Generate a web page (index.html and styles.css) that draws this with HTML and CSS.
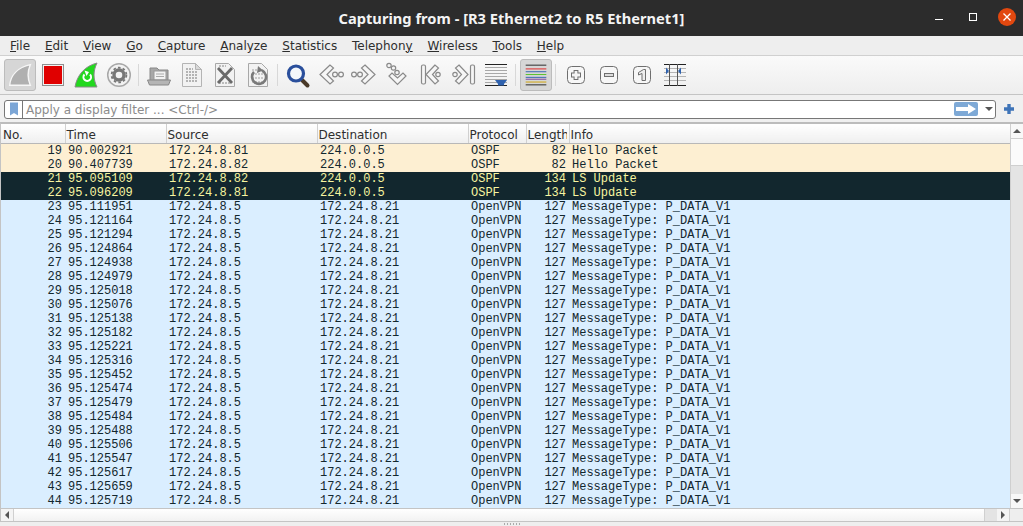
FILE: index.html
```html
<!DOCTYPE html>
<html>
<head>
	<title>Capturing from - [R3 Ethernet2 to R5 Ethernet1]</title>
	<meta charset="utf-8">
	<link rel="stylesheet" href="styles.css">
</head>
<body>
	<div class="titlebar">
		<span class="title">Capturing from - [R3 Ethernet2 to R5 Ethernet1]</span>
		<div class="winBtns">
			<span class="winMin"></span>
			<span class="winMax"></span>
			<span class="winClose">
				<svg width="18" height="18" viewBox="0 0 18 18"><path d="M5.5 5.5l7 7M12.5 5.5l-7 7" stroke="#fff" stroke-width="1.3"/></svg>
			</span>
		</div>
	</div>

	<div class="menubar">
		<span><u>F</u>ile</span>
		<span><u>E</u>dit</span>
		<span><u>V</u>iew</span>
		<span><u>G</u>o</span>
		<span><u>C</u>apture</span>
		<span><u>A</u>nalyze</span>
		<span><u>S</u>tatistics</span>
		<span>Telephon<u>y</u></span>
		<span><u>W</u>ireless</span>
		<span><u>T</u>ools</span>
		<span><u>H</u>elp</span>
	</div>

	<div class="toolbar">
		<div class="tool active">
			<svg width="32" height="32" viewBox="0 0 32 32"><path d="M5 27C6 16 14 8 27 5c-3 7-3 15 0 22z" fill="#b0b0b0" stroke="#f6f6f6" stroke-width="1.5"/></svg>
		</div>
		<div class="tool">
			<svg width="32" height="32" viewBox="0 0 32 32"><rect x="5.500" y="5.500" width="21" height="21" fill="#f2f2f2" stroke="#8f8f8f"/><rect x="7" y="7" width="18" height="18" fill="#e00000"/></svg>
		</div>
		<div class="tool">
			<svg width="32" height="32" viewBox="0 0 32 32"><path d="M5 28C7 16 15 7 27 4c-4 8-4 16 0 24z" fill="#22d81e" stroke="#8a8a8a"/><path d="M20 15.500a3.800 3.800 0 1 1-5.500 0" fill="none" stroke="#fff" stroke-width="2"/><path d="M14.500 11.500l4.500 1.500-2.500 4z" fill="#fff"/></svg>
		</div>
		<div class="tool">
			<svg width="32" height="32" viewBox="0 0 32 32"><circle cx="16" cy="16" r="11.300" fill="#f2f2f2" stroke="#a8a8a8" stroke-width="1.500"/><circle cx="16" cy="16" r="5" fill="none" stroke="#777" stroke-width="3.400"/><circle cx="16" cy="16" r="7.400" fill="none" stroke="#777" stroke-width="1.800" stroke-dasharray="2.600 2.200"/></svg>
		</div>
		<div class="sep"></div>
		<div class="tool">
			<svg width="32" height="32" viewBox="0 0 32 32"><path d="M7 23V9h7l2 2h9v12z" fill="#a8a8a8" stroke="#888"/><rect x="11" y="12" width="12" height="9" fill="#f2f2f2" stroke="#999"/><path d="M13 15h8M13 17.500h8" stroke="#aaa"/><path d="M4.500 21h23l-2 5h-19z" fill="#b5b5b5" stroke="#888"/></svg>
		</div>
		<div class="tool">
			<svg width="32" height="32" viewBox="0 0 32 32"><path d="M6.500 4.500h13l6 6v17h-19z" fill="#f2f2f2" stroke="#b4b4b4"/><path d="M19.500 4.500v6h6z" fill="#d8d8d8" stroke="#b4b4b4"/><path d="M10 10h7M10 13h12M10 16h12M10 19h12M10 22h12" stroke="#a0a0a0" stroke-width="1.400" stroke-dasharray="2 1"/></svg>
		</div>
		<div class="tool">
			<svg width="32" height="32" viewBox="0 0 32 32"><path d="M6.500 4.500h13l6 6v17h-19z" fill="#f2f2f2" stroke="#a8a8a8"/><path d="M10 24h12M10 7h7" stroke="#aaa" stroke-width="1.400" stroke-dasharray="2 1"/><path d="M9 9l14 15M23 9L9 24" stroke="#6a6a6a" stroke-width="2.800"/></svg>
		</div>
		<div class="tool">
			<svg width="32" height="32" viewBox="0 0 32 32"><path d="M6.500 4.500h13l6 6v17h-19z" fill="#f2f2f2" stroke="#a8a8a8"/><path d="M10 11h12M10 15h12M10 19h12M10 23h12" stroke="#bbb" stroke-width="1.400" stroke-dasharray="2 1"/><path d="M20 11.500a7 7 0 1 1-8 1.500" fill="none" stroke="#7a7a7a" stroke-width="2.600"/><path d="M16 7l5 4.500-6 2.500z" fill="#7a7a7a"/></svg>
		</div>
		<div class="sep"></div>
		<div class="tool">
			<svg width="32" height="32" viewBox="0 0 32 32"><path d="M20 21l5.500 5.500" stroke="#4a3a28" stroke-width="4" stroke-linecap="round"/><circle cx="14" cy="14.500" r="7.500" fill="#f4f7fb" stroke="#2a4f9c" stroke-width="3.200"/></svg>
		</div>
		<div class="tool">
			<svg class="arrowIcon" width="32" height="32" viewBox="0 0 32 32"><path d="M15 6L5 15.500 15 25l3.500-3-6.500-6.500L18.500 9z"/><circle cx="20" cy="15.500" r="2.400"/><circle cx="26" cy="15.500" r="2.400"/></svg>
		</div>
		<div class="tool">
			<svg class="arrowIcon" width="32" height="32" viewBox="0 0 32 32"><path d="M17 6l10 9.500L17 25l-3.500-3 6.500-6.500L13.500 9z"/><circle cx="12" cy="15.500" r="2.400"/><circle cx="6" cy="15.500" r="2.400"/></svg>
		</div>
		<div class="tool">
			<svg class="arrowIcon" width="32" height="32" viewBox="0 0 32 32"><path d="M8 17l8.500 8.500L25 17l-3-3-5.500 5-5.500-5z"/><circle cx="16" cy="13.500" r="2.200"/><circle cx="12.500" cy="9" r="2.200"/><circle cx="8" cy="6.500" r="2.200"/></svg>
		</div>
		<div class="tool">
			<svg class="arrowIcon" width="32" height="32" viewBox="0 0 32 32"><rect x="7.500" y="6" width="4" height="19" rx="1.500"/><path d="M21 6l-9 9.500 9 9.500 3.500-3-6-6.500 6-6.500z"/><circle cx="24" cy="15.500" r="2.200"/></svg>
		</div>
		<div class="tool">
			<svg class="arrowIcon" width="32" height="32" viewBox="0 0 32 32"><rect x="23.500" y="6" width="4" height="19" rx="1.500"/><path d="M12 6l9 9.500-9 9.500-3.500-3 6-6.500-6-6.500z"/><circle cx="8" cy="15.500" r="2.200"/></svg>
		</div>
		<div class="tool">
			<svg width="32" height="32" viewBox="0 0 32 32"><path d="M5 5.500h22M5 26.500h22" stroke="#222"/><path d="M5 8.500h22M5 11.500h22M5 14.500h22M5 17.500h22M5 20.500h22M5 23.500h22" stroke="#a8a8a8"/><path d="M15 21h12l-3 4v1.500h-6V25z" fill="#2f62ae"/></svg>
		</div>
		<div class="sep"></div>
		<div class="tool active">
			<svg width="32" height="32" viewBox="0 0 32 32"><path d="M5 5.500h22M5 26.500h22" stroke="#222"/><path d="M5 9.500h22" stroke="#e02020"/><path d="M5 12.500h22" stroke="#2f62ae"/><path d="M5 15.500h22" stroke="#50c020"/><path d="M5 18.500h22" stroke="#2f62ae"/><path d="M5 20.500h22" stroke="#7a3f9a"/><path d="M5 23.500h22" stroke="#d0a000"/></svg>
		</div>
		<div class="sep"></div>
		<div class="tool">
			<svg width="32" height="32" viewBox="0 0 32 32"><rect x="7.500" y="7.500" width="17" height="17" rx="4" fill="#f7f7f7" stroke="#6f6f6f"/><path d="M16 11v10M11 16h10" stroke="#6f6f6f" stroke-width="4.800"/><path d="M16 12v8M12 16h8" stroke="#f4f4f4" stroke-width="2.800"/></svg>
		</div>
		<div class="tool">
			<svg width="32" height="32" viewBox="0 0 32 32"><rect x="7.500" y="7.500" width="17" height="17" rx="4" fill="#f7f7f7" stroke="#6f6f6f"/><rect x="11.500" y="14.500" width="9" height="3" fill="#ddd" stroke="#6f6f6f"/></svg>
		</div>
		<div class="tool">
			<svg width="32" height="32" viewBox="0 0 32 32"><rect x="7.500" y="7.500" width="17" height="17" rx="4" fill="#f7f7f7" stroke="#6f6f6f"/><path d="M12.500 13.500l5-3h2v11h-3.500v-7l-3.500 1.500z" fill="#eee" stroke="#6f6f6f"/></svg>
		</div>
		<div class="tool">
			<svg width="32" height="32" viewBox="0 0 32 32"><path d="M5 5.500h22M5 26.500h22" stroke="#222"/><path d="M5 9.500h22M5 13.500h22M5 17.500h22M5 21.500h22" stroke="#b4b4b4"/><path d="M10.500 5v22M18.500 5v22" stroke="#555"/><path d="M7 8.500l3 3.500-3 3.500zM22 8.500L19 12l3 3.500z" fill="#2f62ae"/></svg>
		</div>
	</div>

	<div class="filterbar">
		<div class="filterInput">
			<span class="bookmark">
				<svg width="8" height="14" viewBox="0 0 10 16"><path d="M0 0h10v16l-5-3-5 3z" fill="#7ca6d6"/></svg>
			</span>
			<span class="placeholder">Apply a display filter ... &lt;Ctrl-/&gt;</span>
			<span class="applyBtn">
				<svg width="20" height="10" viewBox="0 0 20 10"><path d="M0 3h12V0l8 5-8 5V7H0z" fill="#fff"/></svg>
			</span>
			<span class="dropArrow"></span>
		</div>
		<svg class="addBtn" width="12" height="12" viewBox="0 0 12 12"><path d="M6 1v10M1 6h10" stroke="#3f74b8" stroke-width="3.400"/></svg>
	</div>

	<div class="listWrap">
		<div class="listMain">
			<div class="tableBox">
				<table>
					<colgroup>
						<col class="cNo"><col class="cTime"><col class="cSrc"><col class="cDst"><col class="cProto"><col class="cLen"><col class="cInfo">
					</colgroup>
					<thead>
						<tr><th class="first">No.</th><th>Time</th><th>Source</th><th>Destination</th><th>Protocol</th><th><span class="clip">Length</span></th><th>Info</th></tr>
					</thead>
					<tbody>
						<tr class="ospf"><td class="num">19</td><td>90.002921</td><td>172.24.8.81</td><td>224.0.0.5</td><td>OSPF</td><td class="num">82</td><td>Hello Packet</td></tr>
						<tr class="ospf"><td class="num">20</td><td>90.407739</td><td>172.24.8.82</td><td>224.0.0.5</td><td>OSPF</td><td class="num">82</td><td>Hello Packet</td></tr>
						<tr class="dark"><td class="num">21</td><td>95.095109</td><td>172.24.8.82</td><td>224.0.0.5</td><td>OSPF</td><td class="num">134</td><td>LS Update</td></tr>
						<tr class="dark"><td class="num">22</td><td>95.096209</td><td>172.24.8.81</td><td>224.0.0.5</td><td>OSPF</td><td class="num">134</td><td>LS Update</td></tr>
						<tr><td class="num">23</td><td>95.111951</td><td>172.24.8.5</td><td>172.24.8.21</td><td>OpenVPN</td><td class="num">127</td><td>MessageType: P_DATA_V1</td></tr>
						<tr><td class="num">24</td><td>95.121164</td><td>172.24.8.5</td><td>172.24.8.21</td><td>OpenVPN</td><td class="num">127</td><td>MessageType: P_DATA_V1</td></tr>
						<tr><td class="num">25</td><td>95.121294</td><td>172.24.8.5</td><td>172.24.8.21</td><td>OpenVPN</td><td class="num">127</td><td>MessageType: P_DATA_V1</td></tr>
						<tr><td class="num">26</td><td>95.124864</td><td>172.24.8.5</td><td>172.24.8.21</td><td>OpenVPN</td><td class="num">127</td><td>MessageType: P_DATA_V1</td></tr>
						<tr><td class="num">27</td><td>95.124938</td><td>172.24.8.5</td><td>172.24.8.21</td><td>OpenVPN</td><td class="num">127</td><td>MessageType: P_DATA_V1</td></tr>
						<tr><td class="num">28</td><td>95.124979</td><td>172.24.8.5</td><td>172.24.8.21</td><td>OpenVPN</td><td class="num">127</td><td>MessageType: P_DATA_V1</td></tr>
						<tr><td class="num">29</td><td>95.125018</td><td>172.24.8.5</td><td>172.24.8.21</td><td>OpenVPN</td><td class="num">127</td><td>MessageType: P_DATA_V1</td></tr>
						<tr><td class="num">30</td><td>95.125076</td><td>172.24.8.5</td><td>172.24.8.21</td><td>OpenVPN</td><td class="num">127</td><td>MessageType: P_DATA_V1</td></tr>
						<tr><td class="num">31</td><td>95.125138</td><td>172.24.8.5</td><td>172.24.8.21</td><td>OpenVPN</td><td class="num">127</td><td>MessageType: P_DATA_V1</td></tr>
						<tr><td class="num">32</td><td>95.125182</td><td>172.24.8.5</td><td>172.24.8.21</td><td>OpenVPN</td><td class="num">127</td><td>MessageType: P_DATA_V1</td></tr>
						<tr><td class="num">33</td><td>95.125221</td><td>172.24.8.5</td><td>172.24.8.21</td><td>OpenVPN</td><td class="num">127</td><td>MessageType: P_DATA_V1</td></tr>
						<tr><td class="num">34</td><td>95.125316</td><td>172.24.8.5</td><td>172.24.8.21</td><td>OpenVPN</td><td class="num">127</td><td>MessageType: P_DATA_V1</td></tr>
						<tr><td class="num">35</td><td>95.125452</td><td>172.24.8.5</td><td>172.24.8.21</td><td>OpenVPN</td><td class="num">127</td><td>MessageType: P_DATA_V1</td></tr>
						<tr><td class="num">36</td><td>95.125474</td><td>172.24.8.5</td><td>172.24.8.21</td><td>OpenVPN</td><td class="num">127</td><td>MessageType: P_DATA_V1</td></tr>
						<tr><td class="num">37</td><td>95.125479</td><td>172.24.8.5</td><td>172.24.8.21</td><td>OpenVPN</td><td class="num">127</td><td>MessageType: P_DATA_V1</td></tr>
						<tr><td class="num">38</td><td>95.125484</td><td>172.24.8.5</td><td>172.24.8.21</td><td>OpenVPN</td><td class="num">127</td><td>MessageType: P_DATA_V1</td></tr>
						<tr><td class="num">39</td><td>95.125488</td><td>172.24.8.5</td><td>172.24.8.21</td><td>OpenVPN</td><td class="num">127</td><td>MessageType: P_DATA_V1</td></tr>
						<tr><td class="num">40</td><td>95.125506</td><td>172.24.8.5</td><td>172.24.8.21</td><td>OpenVPN</td><td class="num">127</td><td>MessageType: P_DATA_V1</td></tr>
						<tr><td class="num">41</td><td>95.125547</td><td>172.24.8.5</td><td>172.24.8.21</td><td>OpenVPN</td><td class="num">127</td><td>MessageType: P_DATA_V1</td></tr>
						<tr><td class="num">42</td><td>95.125617</td><td>172.24.8.5</td><td>172.24.8.21</td><td>OpenVPN</td><td class="num">127</td><td>MessageType: P_DATA_V1</td></tr>
						<tr><td class="num">43</td><td>95.125659</td><td>172.24.8.5</td><td>172.24.8.21</td><td>OpenVPN</td><td class="num">127</td><td>MessageType: P_DATA_V1</td></tr>
						<tr><td class="num">44</td><td>95.125719</td><td>172.24.8.5</td><td>172.24.8.21</td><td>OpenVPN</td><td class="num">127</td><td>MessageType: P_DATA_V1</td></tr>
					</tbody>
				</table>
			</div>
			<div class="vScroll">
				<span class="scrollBtn"><i class="arrUp"></i></span>
				<span class="vThumb"></span>
				<span class="vTrack"></span>
				<span class="scrollBtn"><i class="arrDown"></i></span>
			</div>
		</div>
		<div class="hScroll">
			<span class="hBtn"><i class="arrLeft"></i></span>
			<span class="hThumb"></span>
			<span class="hTrack"></span>
			<span class="hBtn"><i class="arrRight"></i></span>
			<span class="corner"></span>
		</div>
	</div>
	<div class="statusStrip"><span class="grip"></span></div>
</body>
</html>
```

FILE: styles.css
```css
* {
	padding: 0;
	margin: 0;
	box-sizing: border-box;
}
html, body {
	height: 526px;
	overflow: hidden;
}
body {
	background-color: #eeeeee;
	font-family: "DejaVu Sans", sans-serif;
	font-size: 12px;
	color: #2e2e2e;
}

.titlebar {
	height: 36px;
	background-color: #2c2c2c;
	display: flex;
	align-items: center;
	justify-content: center;
	position: relative;
}
.title {
	color: #f4f4f4;
	font-family: "Noto Sans", sans-serif;
	font-weight: 700;
	font-size: 14.67px;
}
.winBtns {
	position: absolute;
	right: 7px;
	top: 8px;
	display: flex;
	align-items: center;
	gap: 21px;
}
.winMin {
	width: 8px;
	height: 1px;
	background-color: #fff;
	margin: 4px 5px 0 0;
}
.winMax {
	width: 8px;
	height: 8px;
	border: 1px solid #fff;
}
.winClose {
	width: 18px;
	height: 18px;
	border-radius: 50%;
	background-color: #e2480f;
	display: flex;
}

.menubar {
	height: 20px;
	display: flex;
	padding-left: 10px;
	gap: 14.8px;
	align-items: center;
	background-color: #eeeeee;
	border-bottom: 1px solid #d0d0d0;
}

.toolbar {
	height: 39px;
	display: flex;
	align-items: center;
	padding-left: 4px;
	background: linear-gradient(#fafafa, #eeeeee);
	border-bottom: 1px solid #c4c4c4;
}
.tool {
	width: 33px;
	height: 32px;
	flex: none;
}
.tool svg {
	display: block;
}
.tool.active svg {
	background-color: #d6d6d6;
	border: 1px solid #bcbcbc;
	border-radius: 3px;
}
.arrowIcon {
	fill: #f6f6f6;
	stroke: #8a8a8a;
	stroke-width: 1.2;
}
.sep {
	width: 7px;
	flex: none;
	height: 22px;
	margin-left: -1px;
	margin-right: 1px;
	position: relative;
}
.sep::after {
	content: "";
	display: block;
	width: 1px;
	height: 100%;
	margin: 0 auto;
	background-color: #d8d8d8;
}

.filterbar {
	height: 27px;
	display: flex;
	align-items: center;
	padding: 1px 8px 0 4px;
	gap: 7px;
	background-color: #f0f0f0;
}
.filterInput {
	flex: 1;
	height: 19px;
	background-color: #fff;
	border: 1px solid #777;
	border-radius: 3px;
	display: flex;
	align-items: center;
}
.bookmark {
	width: 18px;
	height: 17px;
	display: flex;
	justify-content: center;
	align-items: center;
	border-right: 1px solid #777;
}
.placeholder {
	flex: 1;
	padding: 2px 0 0 3px;
	color: #8c8c8c;
}
.applyBtn {
	width: 24px;
	height: 14px;
	background-color: #7ea9d6;
	border-radius: 2px;
	display: flex;
	align-items: center;
	justify-content: center;
}
.dropArrow {
	width: 0;
	height: 0;
	margin: 0 2px 0 7px;
	border-left: 4px solid transparent;
	border-right: 4px solid transparent;
	border-top: 4px solid #555;
}
.addBtn {
	flex: none;
}

.listWrap {
	border-top: 2px solid #bcbcbc;
	border-left: 1px solid #c4c4c4;
	height: 400px;
	display: flex;
	flex-direction: column;
}
.listMain {
	height: 384px;
	display: flex;
}
.tableBox {
	flex: 1;
	overflow: hidden;
	background-color: #daeeff;
}
table {
	border-collapse: collapse;
	table-layout: fixed;
	width: 1010px;
}
.cNo { width: 64px; }
.cTime { width: 101px; }
.cSrc { width: 151px; }
.cDst { width: 151px; }
.cProto { width: 58px; }
.cLen { width: 43px; }
th {
	height: 19px;
	font-weight: 400;
	text-align: left;
	padding: 4px 0 0 1px;
	background: linear-gradient(#ffffff, #efefef);
	border-right: 1px solid #d0d0d0;
	border-bottom: 1px solid #b8b8b8;
	overflow: hidden;
	white-space: nowrap;
}
th.first {
	padding-left: 2px;
}
.clip {
	display: block;
	width: 39px;
	overflow: hidden;
}
td {
	height: 14px;
	padding: 0 3px;
	font-family: "Liberation Mono", monospace;
	font-size: 12px;
	line-height: 14px;
	white-space: nowrap;
	overflow: hidden;
	color: #12272e;
	background-color: #daeeff;
}
td.num {
	text-align: right;
}
.ospf td {
	background-color: #fdefd2;
}
.dark td {
	background-color: #12272e;
	color: #f7f5a0;
}

.vScroll {
	width: 13px;
	flex: none;
	display: flex;
	flex-direction: column;
	background-color: #e4e4e4;
	border-left: 1px solid #cfcfcf;
}
.scrollBtn {
	height: 14px;
	flex: none;
	background-color: #f8f8f8;
	display: flex;
	align-items: center;
	justify-content: center;
}
.vThumb {
	height: 28px;
	flex: none;
	background-color: #fbfbfb;
	border-top: 1px solid #cfcfcf;
	border-bottom: 1px solid #cfcfcf;
}
.vTrack {
	flex: 1;
}
.arrUp, .arrDown {
	width: 0;
	height: 0;
	border-left: 4px solid transparent;
	border-right: 4px solid transparent;
}
.arrUp {
	border-bottom: 4px solid #555;
}
.arrDown {
	border-top: 4px solid #555;
}

.hScroll {
	height: 14px;
	display: flex;
	border-top: 1px solid #c4c4c4;
	border-bottom: 1px solid #c4c4c4;
	background-color: #e4e4e4;
}
.hBtn {
	width: 13px;
	flex: none;
	background-color: #f4f4f4;
	display: flex;
	align-items: center;
	justify-content: center;
	border-right: 1px solid #d0d0d0;
}
.hThumb {
	width: 971px;
	flex: none;
	background: linear-gradient(#ffffff, #f2f2f2);
	border-right: 1px solid #d0d0d0;
}
.hTrack {
	flex: 1;
}
.corner {
	width: 13px;
	flex: none;
	background-color: #eeeeee;
}
.arrLeft, .arrRight {
	width: 0;
	height: 0;
	border-top: 4px solid transparent;
	border-bottom: 4px solid transparent;
}
.arrLeft {
	border-right: 4px solid #555;
}
.arrRight {
	border-left: 4px solid #555;
}

.statusStrip {
	height: 4px;
	display: flex;
	justify-content: center;
	background-color: #eeeeee;
}
.grip {
	width: 16px;
	height: 2px;
	margin-top: 1px;
	background: repeating-linear-gradient(90deg, #aaa 0 1px, transparent 1px 3px);
}
```
